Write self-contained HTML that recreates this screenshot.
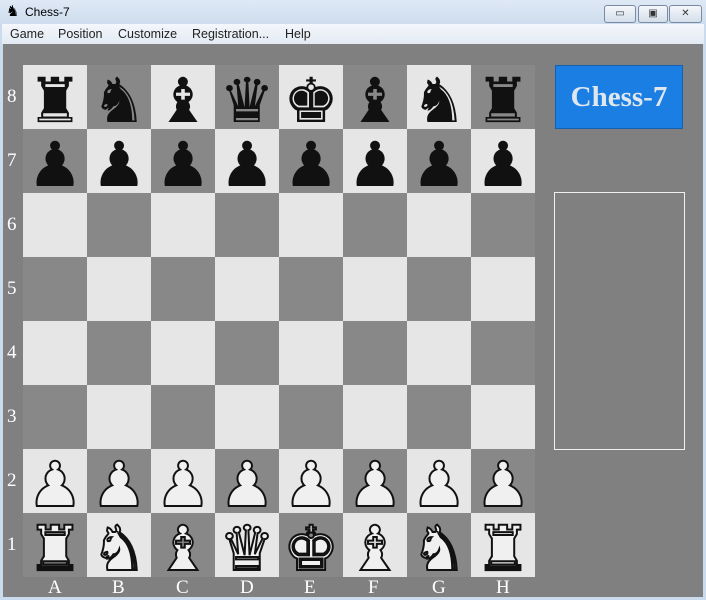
<!DOCTYPE html>
<html><head><style>
body{margin:0;width:706px;height:600px;overflow:hidden;background:#c9dbec;font-family:"Liberation Sans",sans-serif}
#title{position:absolute;left:0;top:0;width:706px;height:24px;background:linear-gradient(#dfe9f5,#cddcee);}
#title span{position:absolute;left:25px;top:5px;font-size:12px;color:#000}
.btn{position:absolute;top:5px;height:16px;border:1px solid #7a8aa0;border-radius:3px;background:linear-gradient(#f4f7fb,#d4deea);font-size:10px;text-align:center;line-height:15px;color:#333}
#menu{position:absolute;left:2px;top:24px;width:702px;height:20px;background:linear-gradient(#f4f7fb,#e3eaf3);font-size:12.5px;color:#222}
#menu span{position:absolute;top:3px}
#main{position:absolute;left:3px;top:44px;width:700px;height:553px;background:#808080}
.sq{position:absolute;width:64px;height:64px;overflow:hidden;text-align:center;font-family:"DejaVu Sans",sans-serif;font-size:62px;line-height:72px}
.b{color:#111}
.w{color:#f0f0f0;-webkit-text-stroke:2px #111}
.lbl{position:absolute;color:#fff;font-family:"Liberation Serif",serif;font-size:19px}
</style></head><body>
<div id="title"><div style="position:absolute;left:6px;top:4px;font-size:15px;line-height:15px">♞</div><span>Chess-7</span>
<div class="btn" style="left:604px;width:30px">▭</div>
<div class="btn" style="left:638px;width:28px">▣</div>
<div class="btn" style="left:669px;width:31px">✕</div></div>
<div id="menu"><span style="left:8px">Game</span><span style="left:56px">Position</span><span style="left:116px">Customize</span><span style="left:190px">Registration...</span><span style="left:283px">Help</span></div>
<div id="main"></div>
<div id="board"></div>
<div style="position:absolute;left:555px;top:65px;width:128px;height:64px;background:#1a7ee3;box-sizing:border-box;border:1px solid #1560b0;color:#dfe6ee;font:bold 29px 'Liberation Serif',serif;text-align:center;line-height:62px">Chess-7</div>
<div style="position:absolute;left:554px;top:192px;width:129px;height:256px;border:1px solid #f0f0f0"></div>
<script>
var bk="♜♞♝♛♚♝♞♜",h="";
for(var r=0;r<8;r++)for(var c=0;c<8;c++){
var light=(r+c)%2==0;var p="",cl="";
if(r==0){p=bk[c];cl="b"}else if(r==1){p="♟";cl="b"}else if(r==6){p="♟";cl="w"}else if(r==7){p=bk[c];cl="w"}
h+='<div class="sq '+cl+'" style="left:'+(23+c*64)+'px;top:'+(65+r*64)+'px;background:'+(light?'#e6e6e6':'#888')+'">'+p+'</div>';}
for(var r=0;r<8;r++)h+='<div class="lbl" style="left:7px;top:'+(86+r*64)+'px">'+(8-r)+'</div>';
var f="ABCDEFGH";for(var c=0;c<8;c++)h+='<div class="lbl" style="left:'+(48+c*64)+'px;top:577px">'+f[c]+'</div>';
document.getElementById("board").innerHTML=h;
</script>
</body></html>
